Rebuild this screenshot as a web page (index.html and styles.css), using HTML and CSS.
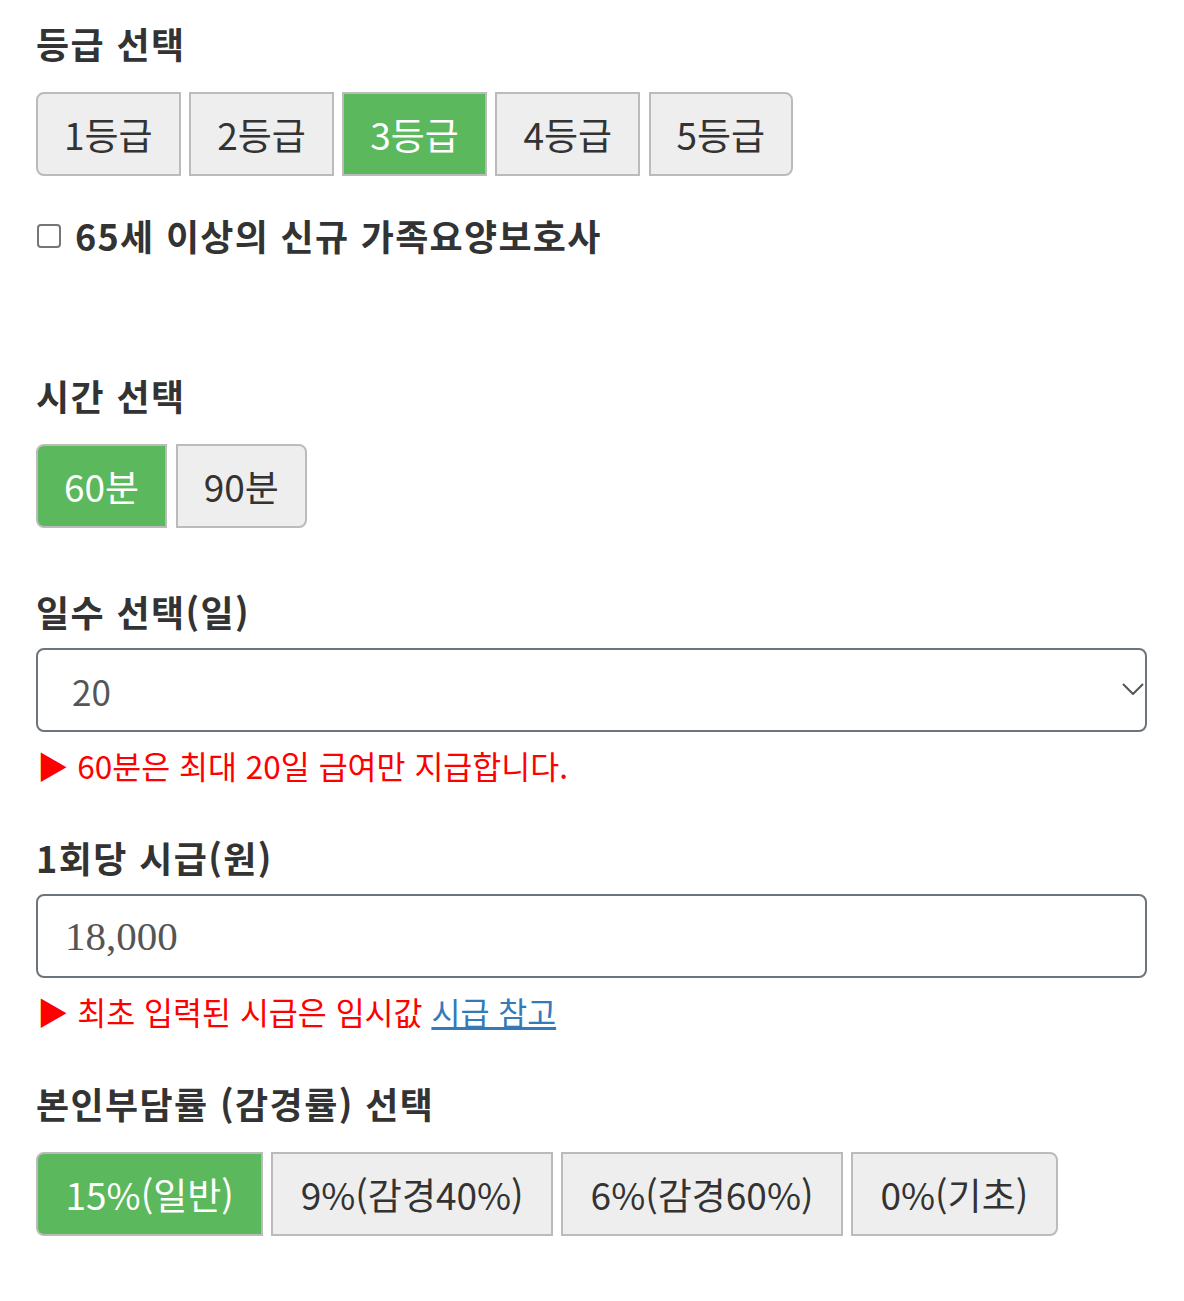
FILE: index.html
```html
<!DOCTYPE html>
<html lang="ko">
<head>
    <meta charset="UTF-8">
    <meta name="viewport" content="width=device-width, initial-scale=1.0">
    <title>급여 계산</title>
    <link rel="stylesheet" href="styles.css">
</head>
<body>
    <div class="wrap">
        <!-- 등급 -->
        <div class="group">
            <h3 class="title">등급 선택</h3>
            <div class="btn-group">
                <button class="btn">1등급</button>
                <button class="btn">2등급</button>
                <button class="btn active">3등급</button>
                <button class="btn">4등급</button>
                <button class="btn">5등급</button>
            </div>
            <label class="check-row">
                <input type="checkbox" class="check">
                <span>65세 이상의 신규 가족요양보호사</span>
            </label>
        </div>

        <!-- 시간 -->
        <div class="group group-btns">
            <h3 class="title">시간 선택</h3>
            <div class="btn-group">
                <button class="btn active">60분</button>
                <button class="btn">90분</button>
            </div>
        </div>

        <!-- 일수 -->
        <div class="group">
            <h3 class="title">일수 선택(일)</h3>
            <div class="select-box">
                <select class="control select">
                    <option>20</option>
                </select>
                <svg class="select-arrow" width="22" height="12" viewBox="0 0 22 12">
                    <path d="M1 1 L11 11 L21 1" fill="none" stroke="#555" stroke-width="2"/>
                </svg>
            </div>
            <p class="note"><span class="mark">▶</span> 60분은 최대 20일 급여만 지급합니다.</p>
        </div>

        <!-- 시급 -->
        <div class="group">
            <h3 class="title">1회당 시급(원)</h3>
            <input type="text" class="control input" value="18,000">
            <p class="note"><span class="mark">▶</span> 최초 입력된 시급은 임시값 <a href="#">시급 참고</a></p>
        </div>

        <!-- 본인부담률 -->
        <div class="group group-btns">
            <h3 class="title">본인부담률 (감경률) 선택</h3>
            <div class="btn-group rate">
                <button class="btn active">15%(일반)</button>
                <button class="btn">9%(감경40%)</button>
                <button class="btn">6%(감경60%)</button>
                <button class="btn">0%(기초)</button>
            </div>
        </div>
    </div>
</body>
</html>
```

FILE: styles.css
```css
body {
    margin: 0;
    font-family: "Noto Sans CJK KR", "Noto Sans", sans-serif;
    color: #333;
    background: #fff;
}

.wrap {
    padding: 18px 37px 0 36px;
}

.group {
    margin-bottom: 44px;
}

.group-btns {
    margin-bottom: 58px;
}

.title {
    margin: 0 0 11px;
    font-size: 36px;
    line-height: 51px;
    font-weight: bold;
    letter-spacing: 1.4px;
}

.btn-group {
    display: flex;
    gap: 8.5px;
    margin-top: 23px;
}

.btn {
    height: 84px;
    padding: 0 26px;
    font-family: inherit;
    font-size: 37px;
    color: #333;
    background-color: #eee;
    border: 2px solid #bbb;
    border-radius: 0;
    cursor: pointer;
}

.rate {
    gap: 8px;
}

.rate .btn {
    padding: 0 27.5px;
}

.btn:first-child {
    border-radius: 8px 0 0 8px;
}

.btn:last-child {
    border-radius: 0 8px 8px 0;
}

.btn.active {
    background-color: #5cb85c;
    color: #fff;
}

.check-row {
    display: flex;
    align-items: center;
    gap: 14px;
    margin-top: 34px;
    margin-bottom: 109px;
    font-size: 36px;
    line-height: 51px;
    font-weight: bold;
    letter-spacing: 1.3px;
}

.check {
    appearance: none;
    margin: 0 0 0 1px;
    width: 24px;
    height: 24px;
    border: 2px solid #767676;
    border-radius: 4px;
    background: #fff;
}

.control {
    display: block;
    box-sizing: border-box;
    width: 100%;
    height: 84px;
    font-family: inherit;
    font-size: 35px;
    color: #555;
    background: #fff;
    border: 2px solid #6c757d;
    border-radius: 8px;
    outline: none;
}

.select-box {
    position: relative;
}

.select {
    appearance: none;
    padding: 0 34px;
}

.select-arrow {
    position: absolute;
    right: 3px;
    top: 35px;
}

.input {
    padding: 0 27px;
    font-family: "Liberation Serif", serif;
    font-size: 41px;
}

.note {
    margin: 11px 0 0;
    font-size: 31.5px;
    line-height: 45px;
    color: red;
}

.mark {
    margin-left: 1px;
}

.note a {
    color: #337ab7;
}
```
